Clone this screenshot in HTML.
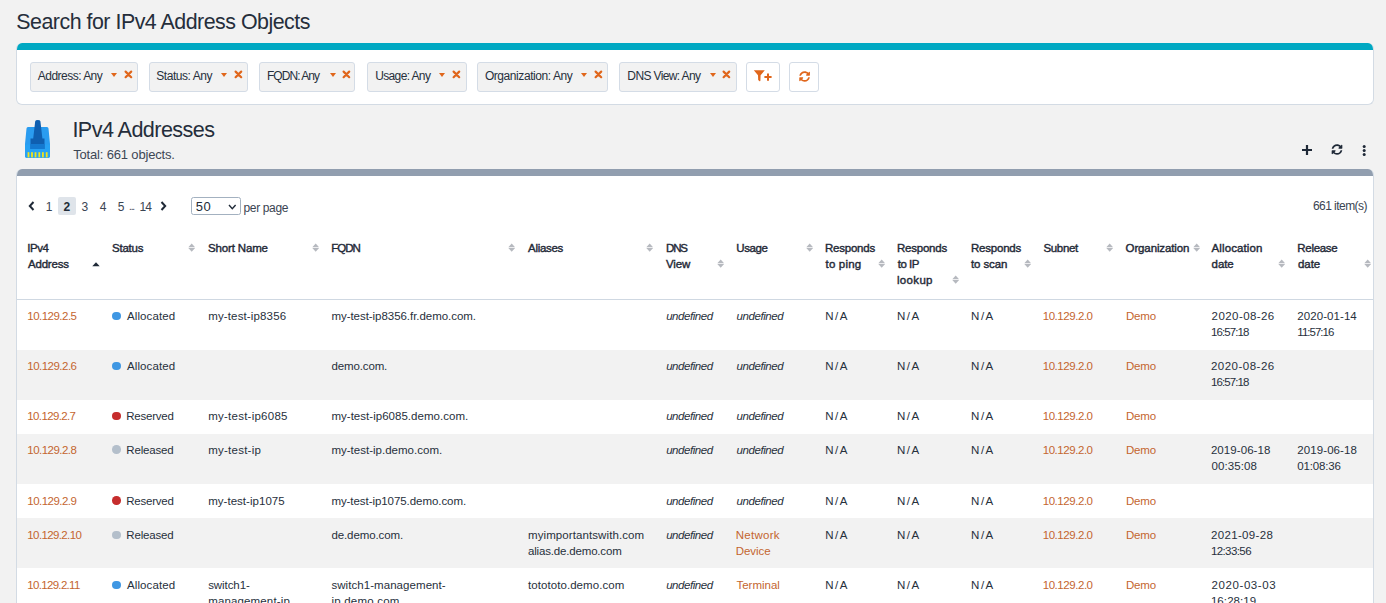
<!DOCTYPE html>
<html><head><meta charset="utf-8"><style>*{box-sizing:border-box;margin:0;padding:0}
html,body{width:1386px;height:603px;overflow:hidden;background:#f2f2f2;font-family:"Liberation Sans",sans-serif;color:#212b36;position:relative}
.t{position:absolute;white-space:nowrap;line-height:16px}
.lh26{line-height:26px}
.fcard{position:absolute;left:16px;top:42.5px;width:1357.5px;height:62.5px;background:#fff;border:1px solid #d3dbe4;border-top:none;border-radius:6px;overflow:hidden}
.fcard:before{content:"";position:absolute;left:-1px;right:-1px;top:0;height:7.3px;background:#00a8c2}
.tcard{position:absolute;left:16px;top:169px;width:1357.5px;height:460px;background:#fff;border:1px solid #d3dbe4;border-top:none;border-radius:6px;overflow:hidden}
.tcard:before{content:"";position:absolute;left:-1px;right:-1px;top:0;height:7px;background:#919eaf}
.chip{position:absolute;height:30.2px;background:#f2f2f2;border:1px solid #d4dce6;border-radius:3px}
.car{position:absolute;top:72.6px;width:0;height:0;border-left:3.3px solid transparent;border-right:3.3px solid transparent;border-top:4.4px solid #e0661b}
.xx{position:absolute;top:70.2px}
.btn{position:absolute;top:61.5px;height:30.2px;background:#fff;border:1px solid #d4dce6;border-radius:3px}
.row{position:absolute;left:17px;width:1356px}
.hline{position:absolute;left:17px;width:1356px;top:298.8px;height:1px;background:#cfd8e2;z-index:5}
.sort{position:absolute}
.dot{position:absolute;width:8.6px;height:8.6px;border-radius:50%}
.abs{position:absolute}
.sb{-webkit-text-stroke:0.4px #1f2937}
</style></head><body>
<div class="fcard"></div>
<div class="btn" style="left:746px;width:33.6px"></div>
<div class="btn" style="left:789px;width:29.8px"></div>
<svg class="abs" style="left:753px;top:70px" width="22" height="14" viewBox="0 0 22 14">
<path d="M0.8 0.2 L11.8 0.2 L7.6 5.2 L7.4 10.6 Q7.3 11.8 6.3 11 L5.2 10 L5 5.2 Z" fill="#e0661b"/>
<path d="M11.4 7.1 L18.6 7.1 M15 3.4 L15 10.8" stroke="#e0661b" stroke-width="2"/>
</svg>
<svg class="abs" style="left:798.6px;top:70.5px" width="11.2" height="11" viewBox="0 0 512 512">
<path fill="#e0661b" d="M370.72 133.28C339.458 104.008 298.888 87.962 255.848 88c-77.458.068-144.328 53.178-162.791 126.85-1.344 5.363-6.122 9.15-11.651 9.15H24.103c-7.498 0-13.194-6.807-11.807-14.176C33.933 94.924 134.813 8 256 8c66.448 0 126.791 26.136 171.315 68.685L463.03 40.97C478.149 25.851 504 36.559 504 57.941V192c0 13.255-10.745 24-24 24H345.941c-21.382 0-32.09-25.851-16.971-40.971l41.75-41.749zM32 296h134.059c21.382 0 32.09 25.851 16.971 40.971l-41.75 41.75c31.262 29.273 71.835 45.319 114.876 45.28 77.418-.07 144.315-53.144 162.787-126.849 1.344-5.363 6.122-9.15 11.651-9.15h57.304c7.498 0 13.194 6.807 11.807 14.176C478.067 417.076 377.187 504 256 504c-66.448 0-126.791-26.136-171.315-68.685L48.97 471.03C33.851 486.149 8 475.441 8 454.059V320c0-13.255 10.745-24 24-24z"/>
</svg>

<div class="abs" style="left:24px;top:119px;width:28px;height:40px">
<svg width="28" height="40" viewBox="0 0 28 40">
<path d="M2.5 9.5 Q2.6 8 4 8 L23 8 Q24.4 8 24.5 9.5 L26 25 L26 37.3 Q26 38.7 24.6 38.7 L2.4 38.7 Q1 38.7 1 37.3 L1 25 Z" fill="#2a9cf0"/>
<path d="M1 25.5 L26 25.5 L26 37.3 Q26 38.7 24.6 38.7 L2.4 38.7 Q1 38.7 1 37.3 Z" fill="#27a2f4"/>
<path d="M11.2 2.2 Q11.5 1 13.8 1 Q16.1 1 16.4 2.2 L18.4 19.5 L20.5 19.5 L20.5 30 L6.5 30 L6.5 19.5 L9.2 19.5 Z" fill="#0f5fb0"/>
<rect x="6.5" y="25" width="14" height="5" fill="#1479d0"/>
<g fill="#f3e31b"><rect x="3.6" y="33.2" width="1.8" height="5.2"/><rect x="7.1" y="33.2" width="1.8" height="5.2"/><rect x="10.6" y="33.2" width="1.8" height="5.2"/><rect x="14.4" y="33.2" width="1.8" height="5.2"/><rect x="18" y="33.2" width="1.8" height="5.2"/><rect x="21.8" y="33.2" width="1.8" height="5.2"/></g>
</svg></div>

<svg class="abs" style="left:1301px;top:144px" width="12" height="12" viewBox="0 0 12 12"><path d="M6 1V11M1 6H11" stroke="#1f2937" stroke-width="2.2"/></svg>
<svg class="abs" style="left:1330.5px;top:144px" width="12" height="11" viewBox="0 0 512 512">
<path fill="#1f2937" d="M370.72 133.28C339.458 104.008 298.888 87.962 255.848 88c-77.458.068-144.328 53.178-162.791 126.85-1.344 5.363-6.122 9.15-11.651 9.15H24.103c-7.498 0-13.194-6.807-11.807-14.176C33.933 94.924 134.813 8 256 8c66.448 0 126.791 26.136 171.315 68.685L463.03 40.97C478.149 25.851 504 36.559 504 57.941V192c0 13.255-10.745 24-24 24H345.941c-21.382 0-32.09-25.851-16.971-40.971l41.75-41.749zM32 296h134.059c21.382 0 32.09 25.851 16.971 40.971l-41.75 41.75c31.262 29.273 71.835 45.319 114.876 45.28 77.418-.07 144.315-53.144 162.787-126.849 1.344-5.363 6.122-9.15 11.651-9.15h57.304c7.498 0 13.194 6.807 11.807 14.176C478.067 417.076 377.187 504 256 504c-66.448 0-126.791-26.136-171.315-68.685L48.97 471.03C33.851 486.149 8 475.441 8 454.059V320c0-13.255 10.745-24 24-24z"/>
</svg>
<svg class="abs" style="left:1361.5px;top:144.5px" width="5" height="11" viewBox="0 0 5 11"><circle cx="2.2" cy="1.6" r="1.5" fill="#1f2937"/><circle cx="2.2" cy="5.5" r="1.5" fill="#1f2937"/><circle cx="2.2" cy="9.4" r="1.5" fill="#1f2937"/></svg>

<div class="tcard"></div>

<!-- pagination -->
<svg class="abs" style="left:28px;top:201px" width="7" height="10" viewBox="0 0 7 10"><path d="M5.5 1L1.8 5L5.5 9" stroke="#1f2937" stroke-width="2" fill="none"/></svg>
<div class="abs" style="left:58.4px;top:197.4px;width:17.2px;height:17.2px;background:#dfe4ea;border-radius:2px"></div>
<svg class="abs" style="left:160px;top:201px" width="7" height="10" viewBox="0 0 7 10"><path d="M1.5 1L5.2 5L1.5 9" stroke="#1f2937" stroke-width="2" fill="none"/></svg>
<div class="abs" style="left:191px;top:197.4px;width:49.5px;height:17.2px;border:1px solid #a3b1c0;border-radius:2.5px;background:#fff"></div>
<svg class="abs" style="left:227.8px;top:203.6px" width="9" height="6" viewBox="0 0 9 6"><path d="M1 1L4.3 4.6L7.6 1" stroke="#1f2937" stroke-width="1.4" fill="none"/></svg>

<div class="hline"></div>

<div class="chip" style="left:30.0px;top:61.5px;width:107.7px"></div><div class="car" style="left:111.1px"></div><svg class="xx" style="left:123.6px" width="9" height="9" viewBox="0 0 9 9"><path d="M1.6 1.6L7.2 7.2M7.2 1.6L1.6 7.2" stroke="#e0661b" stroke-width="2.2" stroke-linecap="round"/></svg><div class="chip" style="left:148.9px;top:61.5px;width:98.8px"></div><div class="car" style="left:221.1px"></div><svg class="xx" style="left:233.5px" width="9" height="9" viewBox="0 0 9 9"><path d="M1.6 1.6L7.2 7.2M7.2 1.6L1.6 7.2" stroke="#e0661b" stroke-width="2.2" stroke-linecap="round"/></svg><div class="chip" style="left:258.8px;top:61.5px;width:96.7px"></div><div class="car" style="left:329.6px"></div><svg class="xx" style="left:341.5px" width="9" height="9" viewBox="0 0 9 9"><path d="M1.6 1.6L7.2 7.2M7.2 1.6L1.6 7.2" stroke="#e0661b" stroke-width="2.2" stroke-linecap="round"/></svg><div class="chip" style="left:366.9px;top:61.5px;width:99.7px"></div><div class="car" style="left:439.1px"></div><svg class="xx" style="left:452.2px" width="9" height="9" viewBox="0 0 9 9"><path d="M1.6 1.6L7.2 7.2M7.2 1.6L1.6 7.2" stroke="#e0661b" stroke-width="2.2" stroke-linecap="round"/></svg><div class="chip" style="left:476.8px;top:61.5px;width:130.9px"></div><div class="car" style="left:581.1px"></div><svg class="xx" style="left:593.5px" width="9" height="9" viewBox="0 0 9 9"><path d="M1.6 1.6L7.2 7.2M7.2 1.6L1.6 7.2" stroke="#e0661b" stroke-width="2.2" stroke-linecap="round"/></svg><div class="chip" style="left:618.9px;top:61.5px;width:117.9px"></div><div class="car" style="left:709.6px"></div><svg class="xx" style="left:722.0px" width="9" height="9" viewBox="0 0 9 9"><path d="M1.6 1.6L7.2 7.2M7.2 1.6L1.6 7.2" stroke="#e0661b" stroke-width="2.2" stroke-linecap="round"/></svg>
<div class="row" style="top:299.8px;height:50.2px;background:#fff"></div><div class="row" style="top:350px;height:50px;background:#f2f2f2"></div><div class="row" style="top:400px;height:34px;background:#fff"></div><div class="row" style="top:434px;height:50px;background:#f2f2f2"></div><div class="row" style="top:484px;height:34px;background:#fff"></div><div class="row" style="top:518px;height:50px;background:#f2f2f2"></div><div class="row" style="top:568px;height:60px;background:#fff"></div>
<svg class="sort" style="left:188.4px;top:243.39999999999998px" width="8" height="10" viewBox="0 0 8 10"><path d="M0.3 4.2L3.7 0.4L7.1 4.2Z M0.3 4.9L3.7 8.7L7.1 4.9Z" fill="#b6b9bf"/></svg><svg class="sort" style="left:311.5px;top:243.39999999999998px" width="8" height="10" viewBox="0 0 8 10"><path d="M0.3 4.2L3.7 0.4L7.1 4.2Z M0.3 4.9L3.7 8.7L7.1 4.9Z" fill="#b6b9bf"/></svg><svg class="sort" style="left:508.4px;top:243.39999999999998px" width="8" height="10" viewBox="0 0 8 10"><path d="M0.3 4.2L3.7 0.4L7.1 4.2Z M0.3 4.9L3.7 8.7L7.1 4.9Z" fill="#b6b9bf"/></svg><svg class="sort" style="left:646.3px;top:243.39999999999998px" width="8" height="10" viewBox="0 0 8 10"><path d="M0.3 4.2L3.7 0.4L7.1 4.2Z M0.3 4.9L3.7 8.7L7.1 4.9Z" fill="#b6b9bf"/></svg><svg class="sort" style="left:717px;top:259.4px" width="8" height="10" viewBox="0 0 8 10"><path d="M0.3 4.2L3.7 0.4L7.1 4.2Z M0.3 4.9L3.7 8.7L7.1 4.9Z" fill="#b6b9bf"/></svg><svg class="sort" style="left:806px;top:243.39999999999998px" width="8" height="10" viewBox="0 0 8 10"><path d="M0.3 4.2L3.7 0.4L7.1 4.2Z M0.3 4.9L3.7 8.7L7.1 4.9Z" fill="#b6b9bf"/></svg><svg class="sort" style="left:878px;top:259.4px" width="8" height="10" viewBox="0 0 8 10"><path d="M0.3 4.2L3.7 0.4L7.1 4.2Z M0.3 4.9L3.7 8.7L7.1 4.9Z" fill="#b6b9bf"/></svg><svg class="sort" style="left:951.9px;top:275.4px" width="8" height="10" viewBox="0 0 8 10"><path d="M0.3 4.2L3.7 0.4L7.1 4.2Z M0.3 4.9L3.7 8.7L7.1 4.9Z" fill="#b6b9bf"/></svg><svg class="sort" style="left:1023.8px;top:259.4px" width="8" height="10" viewBox="0 0 8 10"><path d="M0.3 4.2L3.7 0.4L7.1 4.2Z M0.3 4.9L3.7 8.7L7.1 4.9Z" fill="#b6b9bf"/></svg><svg class="sort" style="left:1106.3px;top:243.39999999999998px" width="8" height="10" viewBox="0 0 8 10"><path d="M0.3 4.2L3.7 0.4L7.1 4.2Z M0.3 4.9L3.7 8.7L7.1 4.9Z" fill="#b6b9bf"/></svg><svg class="sort" style="left:1192.6px;top:243.39999999999998px" width="8" height="10" viewBox="0 0 8 10"><path d="M0.3 4.2L3.7 0.4L7.1 4.2Z M0.3 4.9L3.7 8.7L7.1 4.9Z" fill="#b6b9bf"/></svg><svg class="sort" style="left:1278.4px;top:259.4px" width="8" height="10" viewBox="0 0 8 10"><path d="M0.3 4.2L3.7 0.4L7.1 4.2Z M0.3 4.9L3.7 8.7L7.1 4.9Z" fill="#b6b9bf"/></svg><svg class="sort" style="left:1364.4px;top:259.4px" width="8" height="10" viewBox="0 0 8 10"><path d="M0.3 4.2L3.7 0.4L7.1 4.2Z M0.3 4.9L3.7 8.7L7.1 4.9Z" fill="#b6b9bf"/></svg><svg class="sort" style="left:92.2px;top:261.2px" width="8" height="6" viewBox="0 0 8 6"><path d="M0.3 5.3L4 1.2L7.7 5.3Z" fill="#1f2937"/></svg>
<div class="dot" style="left:112.10000000000001px;top:311.7px;background:#3f97e3"></div><div class="dot" style="left:112.10000000000001px;top:361.7px;background:#3f97e3"></div><div class="dot" style="left:112.10000000000001px;top:411.7px;background:#c62d2d"></div><div class="dot" style="left:112.10000000000001px;top:445.4px;background:#b4bfcb"></div><div class="dot" style="left:112.10000000000001px;top:496.4px;background:#c62d2d"></div><div class="dot" style="left:112.10000000000001px;top:530.8000000000001px;background:#b4bfcb"></div><div class="dot" style="left:112.10000000000001px;top:580.8000000000001px;background:#3f97e3"></div>
<div class="t lh26" id="t0" style="left:16.30px;top:9.4px;font-size:21.4px;color:#252e3b;letter-spacing:-0.499px;">Search for IPv4 Address Objects</div><div class="t lh26" id="t1" style="left:72.41px;top:116.6px;font-size:21.6px;color:#252e3b;letter-spacing:-0.572px;">IPv4 Addresses</div><div class="t " id="t2" style="left:73.15px;top:146.9px;font-size:13px;color:#3d4755;letter-spacing:-0.165px;">Total: 661 objects.</div><div class="t " id="t3" style="left:37.80px;top:68px;font-size:12px;color:#27303c;letter-spacing:-0.521px;">Address: Any</div><div class="t " id="t4" style="left:156.30px;top:68px;font-size:12px;color:#27303c;letter-spacing:-0.461px;">Status: Any</div><div class="t " id="t5" style="left:266.90px;top:68px;font-size:12px;color:#27303c;letter-spacing:-0.940px;">FQDN: Any</div><div class="t " id="t6" style="left:375.15px;top:68px;font-size:12px;color:#27303c;letter-spacing:-0.624px;">Usage: Any</div><div class="t " id="t7" style="left:484.90px;top:68px;font-size:12px;color:#27303c;letter-spacing:-0.428px;">Organization: Any</div><div class="t " id="t8" style="left:627.35px;top:68px;font-size:12px;color:#27303c;letter-spacing:-0.630px;">DNS View: Any</div><div class="t " id="t9" style="left:45.76px;top:198.7px;font-size:12px;color:#3a4452;">1</div><div class="t " id="t10" style="left:63.54px;top:198.7px;font-size:12px;color:#222c38;font-weight:bold;">2</div><div class="t " id="t11" style="left:81.38px;top:198.7px;font-size:12px;color:#3a4452;">3</div><div class="t " id="t12" style="left:99.77px;top:198.7px;font-size:12px;color:#3a4452;">4</div><div class="t " id="t13" style="left:117.69px;top:198.7px;font-size:12px;color:#3a4452;">5</div><div class="t " id="t14" style="left:128.96px;top:198.7px;font-size:10px;color:#3a4452;letter-spacing:-1.100px;">...</div><div class="t " id="t15" style="left:139.50px;top:198.7px;font-size:12px;color:#3a4452;letter-spacing:-0.800px;">14</div><div class="t " id="t16" style="left:195.80px;top:198.5px;font-size:13px;color:#222c38;letter-spacing:0.500px;">50</div><div class="t " id="t17" style="left:243.50px;top:199.5px;font-size:12px;color:#3a4452;letter-spacing:-0.350px;">per page</div><div class="t " id="t18" style="left:1312.95px;top:197.5px;font-size:12px;color:#3a4452;letter-spacing:-0.546px;">661 item(s)</div><div class="t sb" id="t19" style="left:27.30px;top:240.39999999999998px;font-size:11.5px;color:#1f2937;letter-spacing:-0.480px;">IPv4</div><div class="t sb" id="t20" style="left:28.00px;top:256.4px;font-size:11.5px;color:#1f2937;letter-spacing:-0.206px;">Address</div><div class="t sb" id="t21" style="left:112.00px;top:240.39999999999998px;font-size:11.5px;color:#1f2937;letter-spacing:-0.228px;">Status</div><div class="t sb" id="t22" style="left:208.00px;top:240.39999999999998px;font-size:11.5px;color:#1f2937;letter-spacing:-0.149px;">Short Name</div><div class="t sb" id="t23" style="left:331.20px;top:240.39999999999998px;font-size:11.5px;color:#1f2937;letter-spacing:-0.992px;">FQDN</div><div class="t sb" id="t24" style="left:528.00px;top:240.39999999999998px;font-size:11.5px;color:#1f2937;letter-spacing:-0.294px;">Aliases</div><div class="t sb" id="t25" style="left:666.00px;top:240.39999999999998px;font-size:11.5px;color:#1f2937;letter-spacing:-1.131px;">DNS</div><div class="t sb" id="t26" style="left:666.00px;top:256.4px;font-size:11.5px;color:#1f2937;letter-spacing:-0.102px;">View</div><div class="t sb" id="t27" style="left:736.20px;top:240.39999999999998px;font-size:11.5px;color:#1f2937;letter-spacing:-0.364px;">Usage</div><div class="t sb" id="t28" style="left:824.90px;top:240.39999999999998px;font-size:11.5px;color:#1f2937;letter-spacing:-0.202px;">Responds</div><div class="t sb" id="t29" style="left:825.60px;top:256.4px;font-size:11.5px;color:#1f2937;letter-spacing:0.159px;">to ping</div><div class="t sb" id="t30" style="left:896.95px;top:240.39999999999998px;font-size:11.5px;color:#1f2937;letter-spacing:-0.214px;">Responds</div><div class="t sb" id="t31" style="left:897.65px;top:256.4px;font-size:11.5px;color:#1f2937;letter-spacing:-0.453px;">to IP</div><div class="t sb" id="t32" style="left:896.95px;top:272.4px;font-size:11.5px;color:#1f2937;letter-spacing:0.339px;">lookup</div><div class="t sb" id="t33" style="left:971.00px;top:240.39999999999998px;font-size:11.5px;color:#1f2937;letter-spacing:-0.214px;">Responds</div><div class="t sb" id="t34" style="left:971.00px;top:256.4px;font-size:11.5px;color:#1f2937;letter-spacing:-0.105px;">to scan</div><div class="t sb" id="t35" style="left:1043.40px;top:240.39999999999998px;font-size:11.5px;color:#1f2937;letter-spacing:-0.325px;">Subnet</div><div class="t sb" id="t36" style="left:1125.60px;top:240.39999999999998px;font-size:11.5px;color:#1f2937;letter-spacing:-0.132px;">Organization</div><div class="t sb" id="t37" style="left:1211.60px;top:240.39999999999998px;font-size:11.5px;color:#1f2937;letter-spacing:0.107px;">Allocation</div><div class="t sb" id="t38" style="left:1211.60px;top:256.4px;font-size:11.5px;color:#1f2937;letter-spacing:-0.089px;">date</div><div class="t sb" id="t39" style="left:1297.35px;top:240.39999999999998px;font-size:11.5px;color:#1f2937;letter-spacing:-0.304px;">Release</div><div class="t sb" id="t40" style="left:1298.05px;top:256.4px;font-size:11.5px;color:#1f2937;letter-spacing:-0.089px;">date</div><div class="t " id="t41" style="left:27.35px;top:308.3px;font-size:11.5px;color:#c4652f;letter-spacing:-0.527px;">10.129.2.5</div><div class="t " id="t42" style="left:127.00px;top:308.3px;font-size:11.5px;color:#27303c;letter-spacing:0.111px;">Allocated</div><div class="t " id="t43" style="left:208.20px;top:308.3px;font-size:11.5px;color:#27303c;letter-spacing:0.140px;">my-test-ip8356</div><div class="t " id="t44" style="left:331.40px;top:308.3px;font-size:11.5px;color:#27303c;letter-spacing:-0.044px;">my-test-ip8356.fr.demo.com.</div><div class="t " id="t45" style="left:666.15px;top:308.3px;font-size:11.5px;color:#27303c;font-style:italic;letter-spacing:-0.447px;">undefined</div><div class="t " id="t46" style="left:736.60px;top:308.3px;font-size:11.5px;color:#27303c;font-style:italic;letter-spacing:-0.435px;">undefined</div><div class="t " id="t47" style="left:825.15px;top:308.3px;font-size:11.5px;color:#27303c;letter-spacing:1.495px;">N/A</div><div class="t " id="t48" style="left:896.90px;top:308.3px;font-size:11.5px;color:#27303c;letter-spacing:1.495px;">N/A</div><div class="t " id="t49" style="left:971.10px;top:308.3px;font-size:11.5px;color:#27303c;letter-spacing:1.495px;">N/A</div><div class="t " id="t50" style="left:1042.70px;top:308.3px;font-size:11.5px;color:#c4652f;letter-spacing:-0.447px;">10.129.2.0</div><div class="t " id="t51" style="left:1125.95px;top:308.3px;font-size:11.5px;color:#c4652f;letter-spacing:-0.171px;">Demo</div><div class="t " id="t52" style="left:1211.60px;top:308.3px;font-size:11.5px;color:#27303c;letter-spacing:0.425px;">2020-08-26</div><div class="t " id="t53" style="left:1210.90px;top:324.3px;font-size:11.5px;color:#27303c;letter-spacing:-0.890px;">16:57:18</div><div class="t " id="t54" style="left:1297.35px;top:308.3px;font-size:11.5px;color:#27303c;letter-spacing:0.065px;">2020-01-14</div><div class="t " id="t55" style="left:1297.35px;top:324.3px;font-size:11.5px;color:#27303c;letter-spacing:-0.991px;">11:57:16</div><div class="t " id="t56" style="left:27.35px;top:358.3px;font-size:11.5px;color:#c4652f;letter-spacing:-0.527px;">10.129.2.6</div><div class="t " id="t57" style="left:127.00px;top:358.3px;font-size:11.5px;color:#27303c;letter-spacing:0.111px;">Allocated</div><div class="t " id="t58" style="left:331.40px;top:358.3px;font-size:11.5px;color:#27303c;letter-spacing:-0.121px;">demo.com.</div><div class="t " id="t59" style="left:666.15px;top:358.3px;font-size:11.5px;color:#27303c;font-style:italic;letter-spacing:-0.447px;">undefined</div><div class="t " id="t60" style="left:736.60px;top:358.3px;font-size:11.5px;color:#27303c;font-style:italic;letter-spacing:-0.435px;">undefined</div><div class="t " id="t61" style="left:825.15px;top:358.3px;font-size:11.5px;color:#27303c;letter-spacing:1.495px;">N/A</div><div class="t " id="t62" style="left:896.90px;top:358.3px;font-size:11.5px;color:#27303c;letter-spacing:1.495px;">N/A</div><div class="t " id="t63" style="left:971.10px;top:358.3px;font-size:11.5px;color:#27303c;letter-spacing:1.495px;">N/A</div><div class="t " id="t64" style="left:1042.70px;top:358.3px;font-size:11.5px;color:#c4652f;letter-spacing:-0.447px;">10.129.2.0</div><div class="t " id="t65" style="left:1125.95px;top:358.3px;font-size:11.5px;color:#c4652f;letter-spacing:-0.171px;">Demo</div><div class="t " id="t66" style="left:1210.90px;top:358.3px;font-size:11.5px;color:#27303c;letter-spacing:0.503px;">2020-08-26</div><div class="t " id="t67" style="left:1210.90px;top:374.3px;font-size:11.5px;color:#27303c;letter-spacing:-0.890px;">16:57:18</div><div class="t " id="t68" style="left:27.35px;top:408.3px;font-size:11.5px;color:#c4652f;letter-spacing:-0.636px;">10.129.2.7</div><div class="t " id="t69" style="left:126.30px;top:408.3px;font-size:11.5px;color:#27303c;letter-spacing:-0.245px;">Reserved</div><div class="t " id="t70" style="left:208.20px;top:408.3px;font-size:11.5px;color:#27303c;letter-spacing:0.246px;">my-test-ip6085</div><div class="t " id="t71" style="left:331.40px;top:408.3px;font-size:11.5px;color:#27303c;letter-spacing:0.030px;">my-test-ip6085.demo.com.</div><div class="t " id="t72" style="left:666.15px;top:408.3px;font-size:11.5px;color:#27303c;font-style:italic;letter-spacing:-0.447px;">undefined</div><div class="t " id="t73" style="left:736.60px;top:408.3px;font-size:11.5px;color:#27303c;font-style:italic;letter-spacing:-0.435px;">undefined</div><div class="t " id="t74" style="left:825.15px;top:408.3px;font-size:11.5px;color:#27303c;letter-spacing:1.495px;">N/A</div><div class="t " id="t75" style="left:896.90px;top:408.3px;font-size:11.5px;color:#27303c;letter-spacing:1.495px;">N/A</div><div class="t " id="t76" style="left:971.10px;top:408.3px;font-size:11.5px;color:#27303c;letter-spacing:1.495px;">N/A</div><div class="t " id="t77" style="left:1042.70px;top:408.3px;font-size:11.5px;color:#c4652f;letter-spacing:-0.447px;">10.129.2.0</div><div class="t " id="t78" style="left:1125.95px;top:408.3px;font-size:11.5px;color:#c4652f;letter-spacing:-0.171px;">Demo</div><div class="t " id="t79" style="left:27.35px;top:442px;font-size:11.5px;color:#c4652f;letter-spacing:-0.547px;">10.129.2.8</div><div class="t " id="t80" style="left:126.30px;top:442px;font-size:11.5px;color:#27303c;letter-spacing:-0.163px;">Released</div><div class="t " id="t81" style="left:208.20px;top:442px;font-size:11.5px;color:#27303c;letter-spacing:0.248px;">my-test-ip</div><div class="t " id="t82" style="left:331.40px;top:442px;font-size:11.5px;color:#27303c;letter-spacing:0.013px;">my-test-ip.demo.com.</div><div class="t " id="t83" style="left:666.15px;top:442px;font-size:11.5px;color:#27303c;font-style:italic;letter-spacing:-0.447px;">undefined</div><div class="t " id="t84" style="left:736.60px;top:442px;font-size:11.5px;color:#27303c;font-style:italic;letter-spacing:-0.435px;">undefined</div><div class="t " id="t85" style="left:825.15px;top:442px;font-size:11.5px;color:#27303c;letter-spacing:1.495px;">N/A</div><div class="t " id="t86" style="left:896.90px;top:442px;font-size:11.5px;color:#27303c;letter-spacing:1.495px;">N/A</div><div class="t " id="t87" style="left:971.10px;top:442px;font-size:11.5px;color:#27303c;letter-spacing:1.495px;">N/A</div><div class="t " id="t88" style="left:1042.70px;top:442px;font-size:11.5px;color:#c4652f;letter-spacing:-0.447px;">10.129.2.0</div><div class="t " id="t89" style="left:1125.95px;top:442px;font-size:11.5px;color:#c4652f;letter-spacing:-0.171px;">Demo</div><div class="t " id="t90" style="left:1210.90px;top:442px;font-size:11.5px;color:#27303c;letter-spacing:0.074px;">2019-06-18</div><div class="t " id="t91" style="left:1211.60px;top:458px;font-size:11.5px;color:#27303c;letter-spacing:0.073px;">00:35:08</div><div class="t " id="t92" style="left:1297.35px;top:442px;font-size:11.5px;color:#27303c;letter-spacing:0.074px;">2019-06-18</div><div class="t " id="t93" style="left:1297.35px;top:458px;font-size:11.5px;color:#27303c;letter-spacing:-0.165px;">01:08:36</div><div class="t " id="t94" style="left:27.35px;top:493px;font-size:11.5px;color:#c4652f;letter-spacing:-0.547px;">10.129.2.9</div><div class="t " id="t95" style="left:126.30px;top:493px;font-size:11.5px;color:#27303c;letter-spacing:-0.245px;">Reserved</div><div class="t " id="t96" style="left:208.20px;top:493px;font-size:11.5px;color:#27303c;letter-spacing:0.031px;">my-test-ip1075</div><div class="t " id="t97" style="left:331.40px;top:493px;font-size:11.5px;color:#27303c;letter-spacing:-0.059px;">my-test-ip1075.demo.com.</div><div class="t " id="t98" style="left:666.15px;top:493px;font-size:11.5px;color:#27303c;font-style:italic;letter-spacing:-0.447px;">undefined</div><div class="t " id="t99" style="left:736.60px;top:493px;font-size:11.5px;color:#27303c;font-style:italic;letter-spacing:-0.435px;">undefined</div><div class="t " id="t100" style="left:825.15px;top:493px;font-size:11.5px;color:#27303c;letter-spacing:1.495px;">N/A</div><div class="t " id="t101" style="left:896.90px;top:493px;font-size:11.5px;color:#27303c;letter-spacing:1.495px;">N/A</div><div class="t " id="t102" style="left:971.10px;top:493px;font-size:11.5px;color:#27303c;letter-spacing:1.495px;">N/A</div><div class="t " id="t103" style="left:1042.70px;top:493px;font-size:11.5px;color:#c4652f;letter-spacing:-0.447px;">10.129.2.0</div><div class="t " id="t104" style="left:1125.95px;top:493px;font-size:11.5px;color:#c4652f;letter-spacing:-0.171px;">Demo</div><div class="t " id="t105" style="left:27.35px;top:527.4px;font-size:11.5px;color:#c4652f;letter-spacing:-0.624px;">10.129.2.10</div><div class="t " id="t106" style="left:126.30px;top:527.4px;font-size:11.5px;color:#27303c;letter-spacing:-0.163px;">Released</div><div class="t " id="t107" style="left:331.40px;top:527.4px;font-size:11.5px;color:#27303c;letter-spacing:-0.099px;">de.demo.com.</div><div class="t " id="t108" style="left:528.00px;top:527.4px;font-size:11.5px;color:#27303c;letter-spacing:0.092px;">myimportantswith.com</div><div class="t " id="t109" style="left:528.00px;top:543.4px;font-size:11.5px;color:#27303c;letter-spacing:-0.173px;">alias.de.demo.com</div><div class="t " id="t110" style="left:666.15px;top:527.4px;font-size:11.5px;color:#27303c;font-style:italic;letter-spacing:-0.447px;">undefined</div><div class="t " id="t111" style="left:735.70px;top:527.4px;font-size:11.5px;color:#c4652f;letter-spacing:0.291px;">Network</div><div class="t " id="t112" style="left:735.70px;top:543.4px;font-size:11.5px;color:#c4652f;letter-spacing:-0.021px;">Device</div><div class="t " id="t113" style="left:825.15px;top:527.4px;font-size:11.5px;color:#27303c;letter-spacing:1.495px;">N/A</div><div class="t " id="t114" style="left:896.90px;top:527.4px;font-size:11.5px;color:#27303c;letter-spacing:1.495px;">N/A</div><div class="t " id="t115" style="left:971.10px;top:527.4px;font-size:11.5px;color:#27303c;letter-spacing:1.495px;">N/A</div><div class="t " id="t116" style="left:1042.70px;top:527.4px;font-size:11.5px;color:#c4652f;letter-spacing:-0.447px;">10.129.2.0</div><div class="t " id="t117" style="left:1125.95px;top:527.4px;font-size:11.5px;color:#c4652f;letter-spacing:-0.171px;">Demo</div><div class="t " id="t118" style="left:1210.90px;top:527.4px;font-size:11.5px;color:#27303c;letter-spacing:0.352px;">2021-09-28</div><div class="t " id="t119" style="left:1210.90px;top:543.4px;font-size:11.5px;color:#27303c;letter-spacing:-0.590px;">12:33:56</div><div class="t " id="t120" style="left:27.35px;top:577.4px;font-size:11.5px;color:#c4652f;letter-spacing:-0.691px;">10.129.2.11</div><div class="t " id="t121" style="left:127.00px;top:577.4px;font-size:11.5px;color:#27303c;letter-spacing:0.111px;">Allocated</div><div class="t " id="t122" style="left:208.20px;top:577.4px;font-size:11.5px;color:#27303c;letter-spacing:-0.077px;">switch1-</div><div class="t " id="t123" style="left:208.20px;top:593.4px;font-size:11.5px;color:#27303c;letter-spacing:0.142px;">management-ip</div><div class="t " id="t124" style="left:331.40px;top:577.4px;font-size:11.5px;color:#27303c;letter-spacing:0.062px;">switch1-management-</div><div class="t " id="t125" style="left:331.40px;top:593.4px;font-size:11.5px;color:#27303c;letter-spacing:0.219px;">ip.demo.com</div><div class="t " id="t126" style="left:528.00px;top:577.4px;font-size:11.5px;color:#27303c;letter-spacing:0.066px;">totototo.demo.com</div><div class="t " id="t127" style="left:666.15px;top:577.4px;font-size:11.5px;color:#27303c;font-style:italic;letter-spacing:-0.447px;">undefined</div><div class="t " id="t128" style="left:736.40px;top:577.4px;font-size:11.5px;color:#c4652f;letter-spacing:0.005px;">Terminal</div><div class="t " id="t129" style="left:825.15px;top:577.4px;font-size:11.5px;color:#27303c;letter-spacing:1.495px;">N/A</div><div class="t " id="t130" style="left:896.90px;top:577.4px;font-size:11.5px;color:#27303c;letter-spacing:1.495px;">N/A</div><div class="t " id="t131" style="left:971.10px;top:577.4px;font-size:11.5px;color:#27303c;letter-spacing:1.495px;">N/A</div><div class="t " id="t132" style="left:1042.70px;top:577.4px;font-size:11.5px;color:#c4652f;letter-spacing:-0.447px;">10.129.2.0</div><div class="t " id="t133" style="left:1125.95px;top:577.4px;font-size:11.5px;color:#c4652f;letter-spacing:-0.171px;">Demo</div><div class="t " id="t134" style="left:1211.60px;top:577.4px;font-size:11.5px;color:#27303c;letter-spacing:0.574px;">2020-03-03</div><div class="t " id="t135" style="left:1210.90px;top:593.4px;font-size:11.5px;color:#27303c;letter-spacing:0.085px;">16:28:19</div>
</body></html>
